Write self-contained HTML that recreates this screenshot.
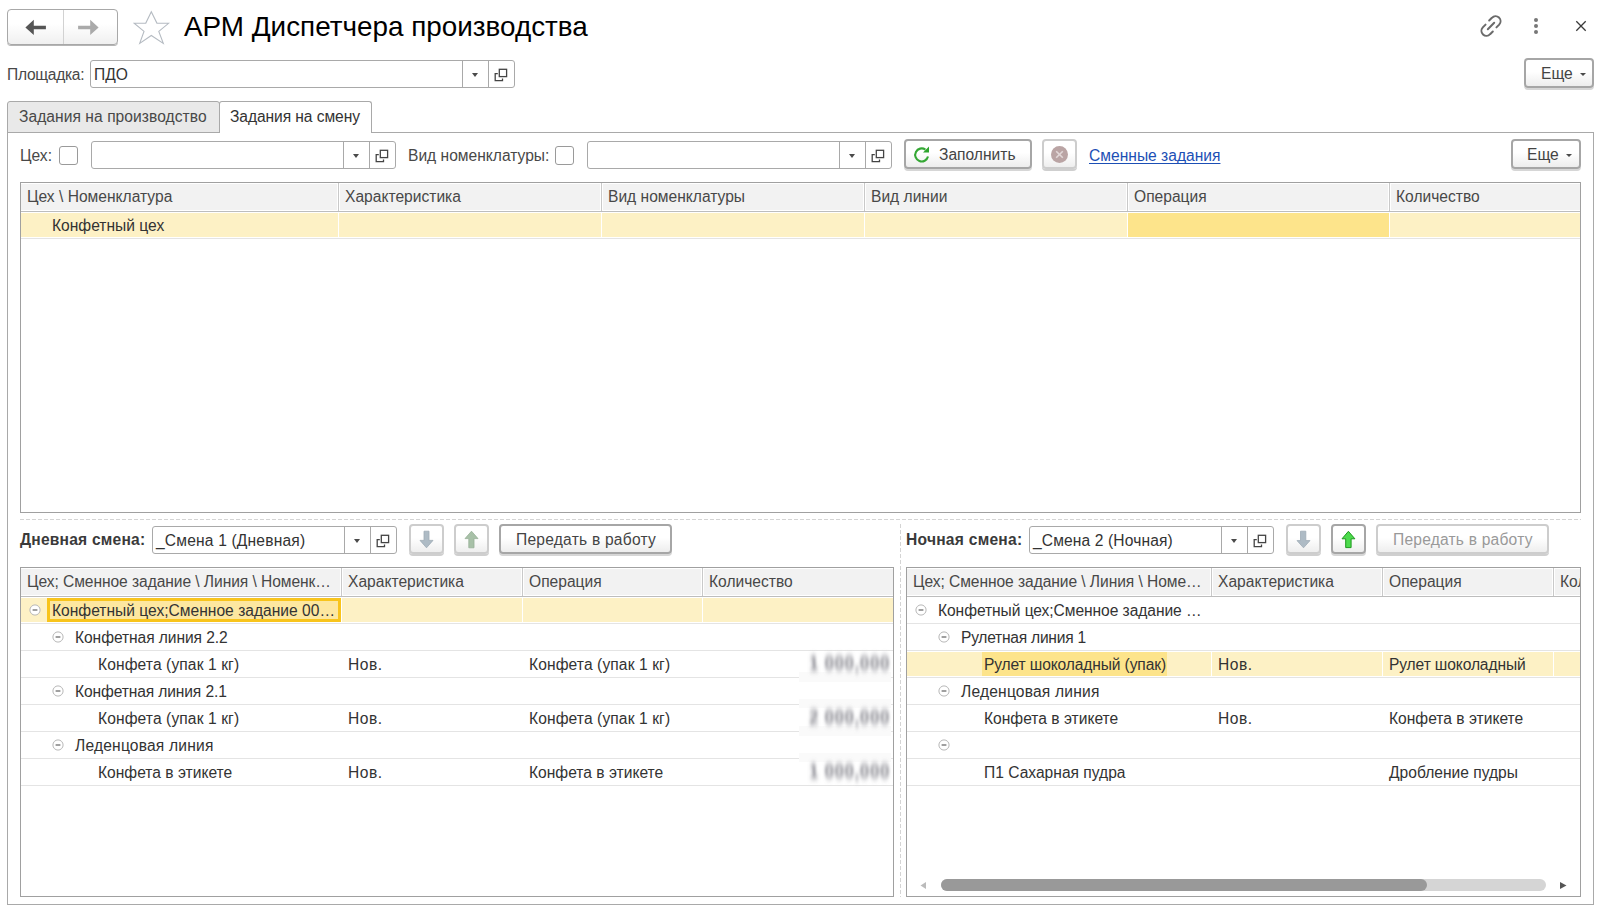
<!DOCTYPE html>
<html><head><meta charset="utf-8">
<style>
*{box-sizing:border-box;margin:0;padding:0}
html,body{width:1608px;height:916px;overflow:hidden;background:#fff}
body{position:relative;font-family:"Liberation Sans",sans-serif;font-size:15.6px;color:#484848}
.a{position:absolute}
.t{position:absolute;white-space:nowrap;line-height:18px;margin-top:1px}
.btn{position:absolute;border:2px solid #a6a6a6;border-radius:4px;background:linear-gradient(#fff 0%,#fff 45%,#ededed 100%);box-shadow:0 2px 0 #d6d6d6}
.btnd{position:absolute;border:2px solid #cdcdcd;border-radius:4px;background:linear-gradient(#fff 0%,#fff 45%,#eeeeee 100%);box-shadow:0 2px 0 #cfcfcf}
.inp{position:absolute;border:1px solid #a9a9a9;border-radius:3px;background:#fff}
.vl{position:absolute;top:0;bottom:0;width:1px;background:#a9a9a9}
.tbl{position:absolute;border:1px solid #a0a0a0;background:#fff;overflow:hidden}
.hdr{position:absolute;left:0;right:0;top:0;height:29px;background:#f2f2f2;border-top:1px solid #fff;border-bottom:1px solid #bdbdbd;box-shadow:inset 0 -1px 0 #fff}
.hsep{position:absolute;top:0;height:28px;width:1px;background:#c9c9c9;box-shadow:-1px 0 0 #fff,1px 0 0 #fff}
.rl{position:absolute;left:0;right:0;height:1px;background:#e4e4e4}
.cb{position:absolute;width:19px;height:19px;border:1px solid #9a9a9a;border-radius:3px;background:#fff}
.tri{position:absolute;width:0;height:0;border-left:3.5px solid transparent;border-right:3.5px solid transparent;border-top:4px solid #4a4a4a}
.dash{position:absolute;height:1px;background:repeating-linear-gradient(90deg,#d4d4d4 0 4px,transparent 4px 6px)}
.dashv{position:absolute;width:1px;background:repeating-linear-gradient(180deg,#d4d4d4 0 4px,transparent 4px 6px)}
.blur{position:absolute;white-space:nowrap;font-size:16px;line-height:18px;color:#666;filter:blur(2.3px);letter-spacing:0.4px;transform:scaleY(1.35);transform-origin:50% 60%}
</style></head><body>
<div class="a" style="left:7px;top:9px;width:111px;height:36px;border:1px solid #a8a8a8;border-radius:4px;background:linear-gradient(#fff 0%,#fff 40%,#f0f0f0 100%);box-shadow:0 1px 0 #b5b5b5"></div>
<div class="a" style="left:63px;top:10px;width:1px;height:34px;background:#d2d2d2"></div>
<svg class="a" style="left:24px;top:18px" width="23" height="19" viewBox="0 0 23 19"><path d="M1.4 9.4 L9.8 1.7 V7.8 H21.9 V11.2 H9.8 V17 Z" fill="#555"/></svg>
<svg class="a" style="left:77px;top:18px" width="23" height="19" viewBox="0 0 23 19"><path d="M21.6 9.4 L13.2 1.7 V7.8 H1.1 V11.2 H13.2 V17 Z" fill="#aaa"/></svg>
<svg class="a" style="left:133px;top:10px" width="37" height="35" viewBox="0 0 37 35"><path d="M18.3 1.8 L23.9 13.1 L35.6 13.3 L25.8 21.4 L30.3 33.4 L18.3 25.5 L6.7 33.4 L11.0 21.4 L1.1 13.3 L12.8 13.1 Z" fill="none" stroke="#b5bbc2" stroke-width="1.1" stroke-linejoin="miter"/></svg>
<div class="t" style="left:184px;top:11px;margin-top:0;font-size:27.85px;line-height:32px;color:#000">АРМ Диспетчера производства</div>
<svg class="a" style="left:1478px;top:13px" width="26" height="26" viewBox="-1.3 -1.3 28.6 28.6"><g fill="none" stroke="#6b6b6b" stroke-width="2.2" stroke-linecap="round"><path d="M11 7 L14 4 A4.6 4.6 0 0 1 22 11.5 L19 14.5"/><path d="M15 19 L12 22 A4.6 4.6 0 0 1 4 14.5 L7 11.5"/><path d="M9.5 16.5 L16.5 9.5"/></g></svg>
<div class="a" style="left:1533.6px;top:17.6px;width:4.8px;height:4.8px;border-radius:50%;background:#777"></div>
<div class="a" style="left:1533.6px;top:23.6px;width:4.8px;height:4.8px;border-radius:50%;background:#777"></div>
<div class="a" style="left:1533.6px;top:29.6px;width:4.8px;height:4.8px;border-radius:50%;background:#777"></div>
<svg class="a" style="left:1574px;top:19px" width="14" height="14" viewBox="0 0 14 14"><path d="M2.3 2.3 L11.7 11.7 M11.7 2.3 L2.3 11.7" stroke="#3a3a3a" stroke-width="1.3"/></svg>
<div class="t" style="left:7px;top:65px;letter-spacing:-0.3px">Площадка:</div>
<div class="inp" style="left:90px;top:60px;width:425px;height:28px"><div class="vl" style="left:371px"></div><div class="vl" style="left:397px"></div></div>
<div class="tri" style="left:472.0px;top:73px"></div>
<svg class="a" style="left:494px;top:68px" width="14" height="14" viewBox="0 0 14 14"><path d="M3.8 5.6 H1.2 V12.7 H8.5 V10.5" fill="none" stroke="#444" stroke-width="1.3"/><rect x="5.3" y="1.3" width="7.3" height="7.3" fill="none" stroke="#444" stroke-width="1.3"/></svg>
<div class="t" style="left:94px;top:65px;color:#333;letter-spacing:0">ПДО</div>
<div class="btn" style="left:1524px;top:58px;width:70px;height:30px"></div>
<div class="t" style="left:1541px;top:64px;color:#444">Еще</div>
<div class="tri" style="left:1579.5px;top:73px;border-left-width:3px;border-right-width:3px;border-top-width:3px"></div>
<div class="a" style="left:7px;top:101px;width:213px;height:32px;background:#e9e9e9;border:1px solid #a9a9a9;border-radius:3px 3px 0 0"></div>
<div class="t" style="left:19px;top:107px;letter-spacing:0.05px">Задания на производство</div>
<div class="a" style="left:7px;top:132px;width:1587px;height:773px;border:1px solid #a9a9a9"></div>
<div class="a" style="left:219px;top:101px;width:153px;height:32px;background:#fff;border:1px solid #a9a9a9;border-bottom:none;border-radius:3px 3px 0 0"></div>
<div class="t" style="left:230px;top:107px;color:#333;letter-spacing:-0.08px">Задания на смену</div>
<div class="t" style="left:20px;top:146px;">Цех:</div>
<div class="cb" style="left:59px;top:146px"></div>
<div class="inp" style="left:91px;top:141px;width:305px;height:28px"><div class="vl" style="left:251px"></div><div class="vl" style="left:277px"></div></div>
<div class="tri" style="left:353.0px;top:154px"></div>
<svg class="a" style="left:375px;top:149px" width="14" height="14" viewBox="0 0 14 14"><path d="M3.8 5.6 H1.2 V12.7 H8.5 V10.5" fill="none" stroke="#444" stroke-width="1.3"/><rect x="5.3" y="1.3" width="7.3" height="7.3" fill="none" stroke="#444" stroke-width="1.3"/></svg>
<div class="t" style="left:408px;top:146px;">Вид номенклатуры:</div>
<div class="cb" style="left:555px;top:146px"></div>
<div class="inp" style="left:587px;top:141px;width:305px;height:28px"><div class="vl" style="left:251px"></div><div class="vl" style="left:277px"></div></div>
<div class="tri" style="left:849.0px;top:154px"></div>
<svg class="a" style="left:871px;top:149px" width="14" height="14" viewBox="0 0 14 14"><path d="M3.8 5.6 H1.2 V12.7 H8.5 V10.5" fill="none" stroke="#444" stroke-width="1.3"/><rect x="5.3" y="1.3" width="7.3" height="7.3" fill="none" stroke="#444" stroke-width="1.3"/></svg>
<div class="btn" style="left:904px;top:139px;width:128px;height:30px"></div>
<svg class="a" style="left:912px;top:145px" width="19" height="19" viewBox="0 0 19 19"><path d="M16 11.5 A6.5 6.5 0 1 1 13.4 4.6" fill="none" stroke="#35a835" stroke-width="2.1"/><path d="M11 7.5 L17 7.5 L17 1.5 Z" fill="#2ea52e"/></svg>
<div class="t" style="left:939px;top:145px;color:#444">Заполнить</div>
<div class="btnd" style="left:1042px;top:139px;width:35px;height:30px"></div>
<svg class="a" style="left:1051px;top:146px" width="17" height="17" viewBox="0 0 17 17"><circle cx="8.5" cy="8.5" r="8.5" fill="#baa4a4"/><path d="M5.2 5.2 L11.8 11.8 M11.8 5.2 L5.2 11.8" stroke="#e2d8d8" stroke-width="1.6"/></svg>
<div class="t" style="left:1089px;top:146px;color:#1c4fb5;text-decoration:underline;text-underline-offset:2px;text-decoration-skip-ink:none">Сменные задания</div>
<div class="btn" style="left:1511px;top:139px;width:70px;height:30px"></div>
<div class="t" style="left:1527px;top:145px;color:#444">Еще</div>
<div class="tri" style="left:1566px;top:154px;border-left-width:3px;border-right-width:3px;border-top-width:3px"></div>
<div class="tbl" style="left:20px;top:182px;width:1561px;height:331px">
<div class="hdr"></div>
<div class="hsep" style="left:317px"></div>
<div class="hsep" style="left:580px"></div>
<div class="hsep" style="left:843px"></div>
<div class="hsep" style="left:1106px"></div>
<div class="hsep" style="left:1368px"></div>
<div class="a" style="left:0;right:0;top:30px;height:24px;background:#fdf1c5"></div>
<div class="a" style="left:1107px;width:261px;top:30px;height:24px;background:#fde48b"></div>
<div class="a" style="left:317px;width:1px;top:30px;height:24px;background:#fff"></div>
<div class="a" style="left:580px;width:1px;top:30px;height:24px;background:#fff"></div>
<div class="a" style="left:843px;width:1px;top:30px;height:24px;background:#fff"></div>
<div class="a" style="left:1106px;width:1px;top:30px;height:24px;background:#fff"></div>
<div class="a" style="left:1368px;width:1px;top:30px;height:24px;background:#fff"></div>
<div class="rl" style="top:55px"></div>
</div>
<div class="t" style="left:27px;top:187px;">Цех \ Номенклатура</div>
<div class="t" style="left:345px;top:187px;">Характеристика</div>
<div class="t" style="left:608px;top:187px;">Вид номенклатуры</div>
<div class="t" style="left:871px;top:187px;">Вид линии</div>
<div class="t" style="left:1134px;top:187px;">Операция</div>
<div class="t" style="left:1396px;top:187px;">Количество</div>
<div class="t" style="left:52px;top:216px;color:#333">Конфетный цех</div>
<div class="dash" style="left:20px;top:519px;width:1561px"></div>
<div class="dashv" style="left:900px;top:524px;height:373px"></div>
<div class="t" style="left:20px;top:530px;font-weight:bold;letter-spacing:0.2px;color:#3a3a3a">Дневная смена:</div>
<div class="inp" style="left:152px;top:526px;width:245px;height:28px"><div class="vl" style="left:191px"></div><div class="vl" style="left:217px"></div></div>
<div class="tri" style="left:354.0px;top:539px"></div>
<svg class="a" style="left:376px;top:534px" width="14" height="14" viewBox="0 0 14 14"><path d="M3.8 5.6 H1.2 V12.7 H8.5 V10.5" fill="none" stroke="#444" stroke-width="1.3"/><rect x="5.3" y="1.3" width="7.3" height="7.3" fill="none" stroke="#444" stroke-width="1.3"/></svg>
<div class="t" style="left:156px;top:531px;color:#333;letter-spacing:0.17px">_Смена 1 (Дневная)</div>
<div class="btnd" style="left:409px;top:524px;width:35px;height:30px"></div>
<svg class="a" style="left:418px;top:530px" width="17" height="20" viewBox="0 0 17 20"><path d="M6 1.2 H11 V10.4 H15 L8.5 17.8 L2 10.4 H6 Z" fill="#aebbc5" stroke="#9eabb5" stroke-width="0.8" stroke-linejoin="round"/></svg>
<div class="btnd" style="left:454px;top:524px;width:35px;height:30px"></div>
<svg class="a" style="left:463px;top:530px" width="17" height="20" viewBox="0 0 17 20"><path d="M5.8 17.8 H11 V8.6 H15 L8.5 1.2 L2 8.6 H5.8 Z" fill="#a8c1a8" stroke="#97b097" stroke-width="0.8" stroke-linejoin="round"/></svg>
<div class="btn" style="left:499px;top:524px;width:173px;height:30px"></div>
<div class="t" style="left:516px;top:530px;color:#444;letter-spacing:0.22px">Передать в работу</div>
<div class="tbl" style="left:20px;top:567px;width:874px;height:330px">
<div class="hdr"></div>
<div class="hsep" style="left:320px"></div>
<div class="hsep" style="left:501px"></div>
<div class="hsep" style="left:681px"></div>
<div class="a" style="left:0;right:0;top:30px;height:24px;background:#fdf1c5"></div>
<div class="a" style="left:26px;width:294px;top:30px;height:24px;background:#fde7a0;border:3px solid #f8c41c"></div>
<div class="a" style="left:320px;width:1px;top:30px;height:24px;background:#fff"></div>
<div class="a" style="left:501px;width:1px;top:30px;height:24px;background:#fff"></div>
<div class="a" style="left:681px;width:1px;top:30px;height:24px;background:#fff"></div>
<div class="rl" style="top:55px"></div>
<div class="rl" style="top:82px"></div>
<div class="rl" style="top:109px"></div>
<div class="rl" style="top:136px"></div>
<div class="rl" style="top:163px"></div>
<div class="rl" style="top:190px"></div>
<div class="rl" style="top:217px"></div>
</div>
<div class="t" style="left:27px;top:572px;;letter-spacing:-0.07px">Цех; Сменное задание \ Линия \ Номенк…</div>
<div class="t" style="left:348px;top:572px;">Характеристика</div>
<div class="t" style="left:529px;top:572px;">Операция</div>
<div class="t" style="left:709px;top:572px;">Количество</div>
<div class="t" style="left:52px;top:601px;color:#333">Конфетный цех;Сменное задание 00…</div>
<svg class="a" style="left:28.5px;top:603.5px" width="12" height="12" viewBox="0 0 12 12"><circle cx="6" cy="6" r="5.1" fill="#fff" stroke="#b8b8b8" stroke-width="1"/><path d="M3.6 6 H8.4" stroke="#5a5a5a" stroke-width="1.15"/></svg>
<div class="t" style="left:75px;top:628px;color:#333;letter-spacing:-0.08px">Конфетная линия 2.2</div>
<svg class="a" style="left:51.5px;top:630.5px" width="12" height="12" viewBox="0 0 12 12"><circle cx="6" cy="6" r="5.1" fill="#fff" stroke="#b8b8b8" stroke-width="1"/><path d="M3.6 6 H8.4" stroke="#5a5a5a" stroke-width="1.15"/></svg>
<div class="t" style="left:98px;top:655px;color:#333;letter-spacing:0.1px">Конфета (упак 1 кг)</div>
<div class="t" style="left:348px;top:655px;color:#333;letter-spacing:0.5px">Нов.</div>
<div class="t" style="left:529px;top:655px;color:#333;letter-spacing:0.1px">Конфета (упак 1 кг)</div>
<div class="t" style="left:75px;top:682px;color:#333;letter-spacing:-0.13px">Конфетная линия 2.1</div>
<svg class="a" style="left:51.5px;top:684.5px" width="12" height="12" viewBox="0 0 12 12"><circle cx="6" cy="6" r="5.1" fill="#fff" stroke="#b8b8b8" stroke-width="1"/><path d="M3.6 6 H8.4" stroke="#5a5a5a" stroke-width="1.15"/></svg>
<div class="t" style="left:98px;top:709px;color:#333;letter-spacing:0.1px">Конфета (упак 1 кг)</div>
<div class="t" style="left:348px;top:709px;color:#333;letter-spacing:0.5px">Нов.</div>
<div class="t" style="left:529px;top:709px;color:#333;letter-spacing:0.1px">Конфета (упак 1 кг)</div>
<div class="t" style="left:75px;top:736px;color:#333;letter-spacing:0.19px">Леденцовая линия</div>
<svg class="a" style="left:51.5px;top:738.5px" width="12" height="12" viewBox="0 0 12 12"><circle cx="6" cy="6" r="5.1" fill="#fff" stroke="#b8b8b8" stroke-width="1"/><path d="M3.6 6 H8.4" stroke="#5a5a5a" stroke-width="1.15"/></svg>
<div class="t" style="left:98px;top:763px;color:#333">Конфета в этикете</div>
<div class="t" style="left:348px;top:763px;color:#333;letter-spacing:0.5px">Нов.</div>
<div class="t" style="left:529px;top:763px;color:#333">Конфета в этикете</div>
<div class="a" style="left:799px;top:672px;width:92px;height:10px;background:#fafafa"></div>
<div class="a" style="left:799px;top:699px;width:92px;height:9px;background:#fafafa"></div>
<div class="a" style="left:799px;top:726px;width:92px;height:10px;background:#fafafa"></div>
<div class="a" style="left:799px;top:753px;width:92px;height:9px;background:#fafafa"></div>
<svg class="a" style="left:0;top:0" width="0" height="0"><defs><filter id="bl" x="-20%" y="-50%" width="140%" height="200%"><feGaussianBlur stdDeviation="1.5 3.2"/></filter></defs></svg>
<svg class="a" style="left:806px;top:648px" width="90" height="32" viewBox="0 0 90 32"><g filter="url(#bl)"><text x="84" y="22" text-anchor="end" font-family="Liberation Sans" font-size="17" font-weight="bold" fill="#7e7e86" letter-spacing="0.6" transform="translate(0 -3) scale(1 1.15)">1 000,000</text></g></svg>
<svg class="a" style="left:806px;top:702px" width="90" height="32" viewBox="0 0 90 32"><g filter="url(#bl)"><text x="84" y="22" text-anchor="end" font-family="Liberation Sans" font-size="17" font-weight="bold" fill="#7e7e86" letter-spacing="0.6" transform="translate(0 -3) scale(1 1.15)">2 000,000</text></g></svg>
<svg class="a" style="left:806px;top:756px" width="90" height="32" viewBox="0 0 90 32"><g filter="url(#bl)"><text x="84" y="22" text-anchor="end" font-family="Liberation Sans" font-size="17" font-weight="bold" fill="#7e7e86" letter-spacing="0.6" transform="translate(0 -3) scale(1 1.15)">1 000,000</text></g></svg>
<div class="t" style="left:906px;top:530px;font-weight:bold;letter-spacing:0.25px;color:#3a3a3a">Ночная смена:</div>
<div class="inp" style="left:1029px;top:526px;width:245px;height:28px"><div class="vl" style="left:191px"></div><div class="vl" style="left:217px"></div></div>
<div class="tri" style="left:1231.0px;top:539px"></div>
<svg class="a" style="left:1253px;top:534px" width="14" height="14" viewBox="0 0 14 14"><path d="M3.8 5.6 H1.2 V12.7 H8.5 V10.5" fill="none" stroke="#444" stroke-width="1.3"/><rect x="5.3" y="1.3" width="7.3" height="7.3" fill="none" stroke="#444" stroke-width="1.3"/></svg>
<div class="t" style="left:1033px;top:531px;color:#333;letter-spacing:0.12px">_Смена 2 (Ночная)</div>
<div class="btnd" style="left:1286px;top:524px;width:35px;height:30px"></div>
<svg class="a" style="left:1295px;top:530px" width="17" height="20" viewBox="0 0 17 20"><path d="M5.5 1.2 H10.8 V10.6 H15 L8.5 17.8 L2 10.6 H5.5 Z" fill="#aebbc5" stroke="#9eabb5" stroke-width="0.8" stroke-linejoin="round"/></svg>
<div class="btn" style="left:1331px;top:524px;width:35px;height:30px"></div>
<svg class="a" style="left:1340px;top:530px" width="17" height="20" viewBox="0 0 17 20"><path d="M5.7 17.6 H11.1 V8.8 H14.9 L8.4 1.3 L2 8.8 H5.7 Z" fill="#4ddb4d" stroke="#1f9a1f" stroke-width="1" stroke-linejoin="round"/></svg>
<div class="btnd" style="left:1376px;top:524px;width:173px;height:30px"></div>
<div class="t" style="left:1393px;top:530px;color:#999;letter-spacing:0.2px">Передать в работу</div>
<div class="tbl" style="left:906px;top:567px;width:675px;height:330px">
<div class="hdr"></div>
<div class="hsep" style="left:304px"></div>
<div class="hsep" style="left:475px"></div>
<div class="hsep" style="left:646px"></div>
<div class="a" style="left:0;right:0;top:84px;height:24px;background:#fdf1c5"></div>
<div class="a" style="left:75px;width:185px;top:84px;height:24px;background:#fde48b"></div>
<div class="a" style="left:304px;width:1px;top:84px;height:24px;background:#fff"></div>
<div class="a" style="left:475px;width:1px;top:84px;height:24px;background:#fff"></div>
<div class="a" style="left:646px;width:1px;top:84px;height:24px;background:#fff"></div>
<div class="rl" style="top:55px"></div>
<div class="rl" style="top:82px"></div>
<div class="rl" style="top:109px"></div>
<div class="rl" style="top:136px"></div>
<div class="rl" style="top:163px"></div>
<div class="rl" style="top:190px"></div>
<div class="rl" style="top:217px"></div>
</div>
<div class="t" style="left:913px;top:572px;;letter-spacing:-0.07px">Цех; Сменное задание \ Линия \ Номе…</div>
<div class="t" style="left:1218px;top:572px;">Характеристика</div>
<div class="t" style="left:1389px;top:572px;">Операция</div>
<div class="t" style="left:1560px;top:572px;width:20px;overflow:hidden">Количество</div>
<div class="t" style="left:938px;top:601px;color:#333;letter-spacing:-0.07px">Конфетный цех;Сменное задание …</div>
<svg class="a" style="left:914.5px;top:603.5px" width="12" height="12" viewBox="0 0 12 12"><circle cx="6" cy="6" r="5.1" fill="#fff" stroke="#b8b8b8" stroke-width="1"/><path d="M3.6 6 H8.4" stroke="#5a5a5a" stroke-width="1.15"/></svg>
<div class="t" style="left:961px;top:628px;color:#333;letter-spacing:-0.25px">Рулетная линия 1</div>
<svg class="a" style="left:937.5px;top:630.5px" width="12" height="12" viewBox="0 0 12 12"><circle cx="6" cy="6" r="5.1" fill="#fff" stroke="#b8b8b8" stroke-width="1"/><path d="M3.6 6 H8.4" stroke="#5a5a5a" stroke-width="1.15"/></svg>
<div class="t" style="left:984px;top:655px;color:#333;letter-spacing:-0.13px">Рулет шоколадный (упак)</div>
<div class="t" style="left:1218px;top:655px;color:#333;letter-spacing:0.5px">Нов.</div>
<div class="t" style="left:1389px;top:655px;color:#333;letter-spacing:-0.12px">Рулет шоколадный</div>
<div class="t" style="left:961px;top:682px;color:#333;letter-spacing:0.19px">Леденцовая линия</div>
<svg class="a" style="left:937.5px;top:684.5px" width="12" height="12" viewBox="0 0 12 12"><circle cx="6" cy="6" r="5.1" fill="#fff" stroke="#b8b8b8" stroke-width="1"/><path d="M3.6 6 H8.4" stroke="#5a5a5a" stroke-width="1.15"/></svg>
<div class="t" style="left:984px;top:709px;color:#333">Конфета в этикете</div>
<div class="t" style="left:1218px;top:709px;color:#333;letter-spacing:0.5px">Нов.</div>
<div class="t" style="left:1389px;top:709px;color:#333">Конфета в этикете</div>
<svg class="a" style="left:937.5px;top:738.5px" width="12" height="12" viewBox="0 0 12 12"><circle cx="6" cy="6" r="5.1" fill="#fff" stroke="#b8b8b8" stroke-width="1"/><path d="M3.6 6 H8.4" stroke="#5a5a5a" stroke-width="1.15"/></svg>
<div class="t" style="left:984px;top:763px;color:#333">П1 Сахарная пудра</div>
<div class="t" style="left:1389px;top:763px;color:#333">Дробление пудры</div>
<div class="a" style="left:941px;top:879px;width:605px;height:12px;border-radius:6px;background:#d5d5d5"></div>
<div class="a" style="left:941px;top:879px;width:486px;height:12px;border-radius:6px;background:#999"></div>
<svg class="a" style="left:919px;top:881px" width="9" height="9" viewBox="0 0 9 9"><path d="M1.5 4.5 L7 1 V8 Z" fill="#bbb"/></svg>
<svg class="a" style="left:1559px;top:881px" width="9" height="9" viewBox="0 0 9 9"><path d="M7.5 4.5 L1 1 V8 Z" fill="#555"/></svg>
</body></html>
